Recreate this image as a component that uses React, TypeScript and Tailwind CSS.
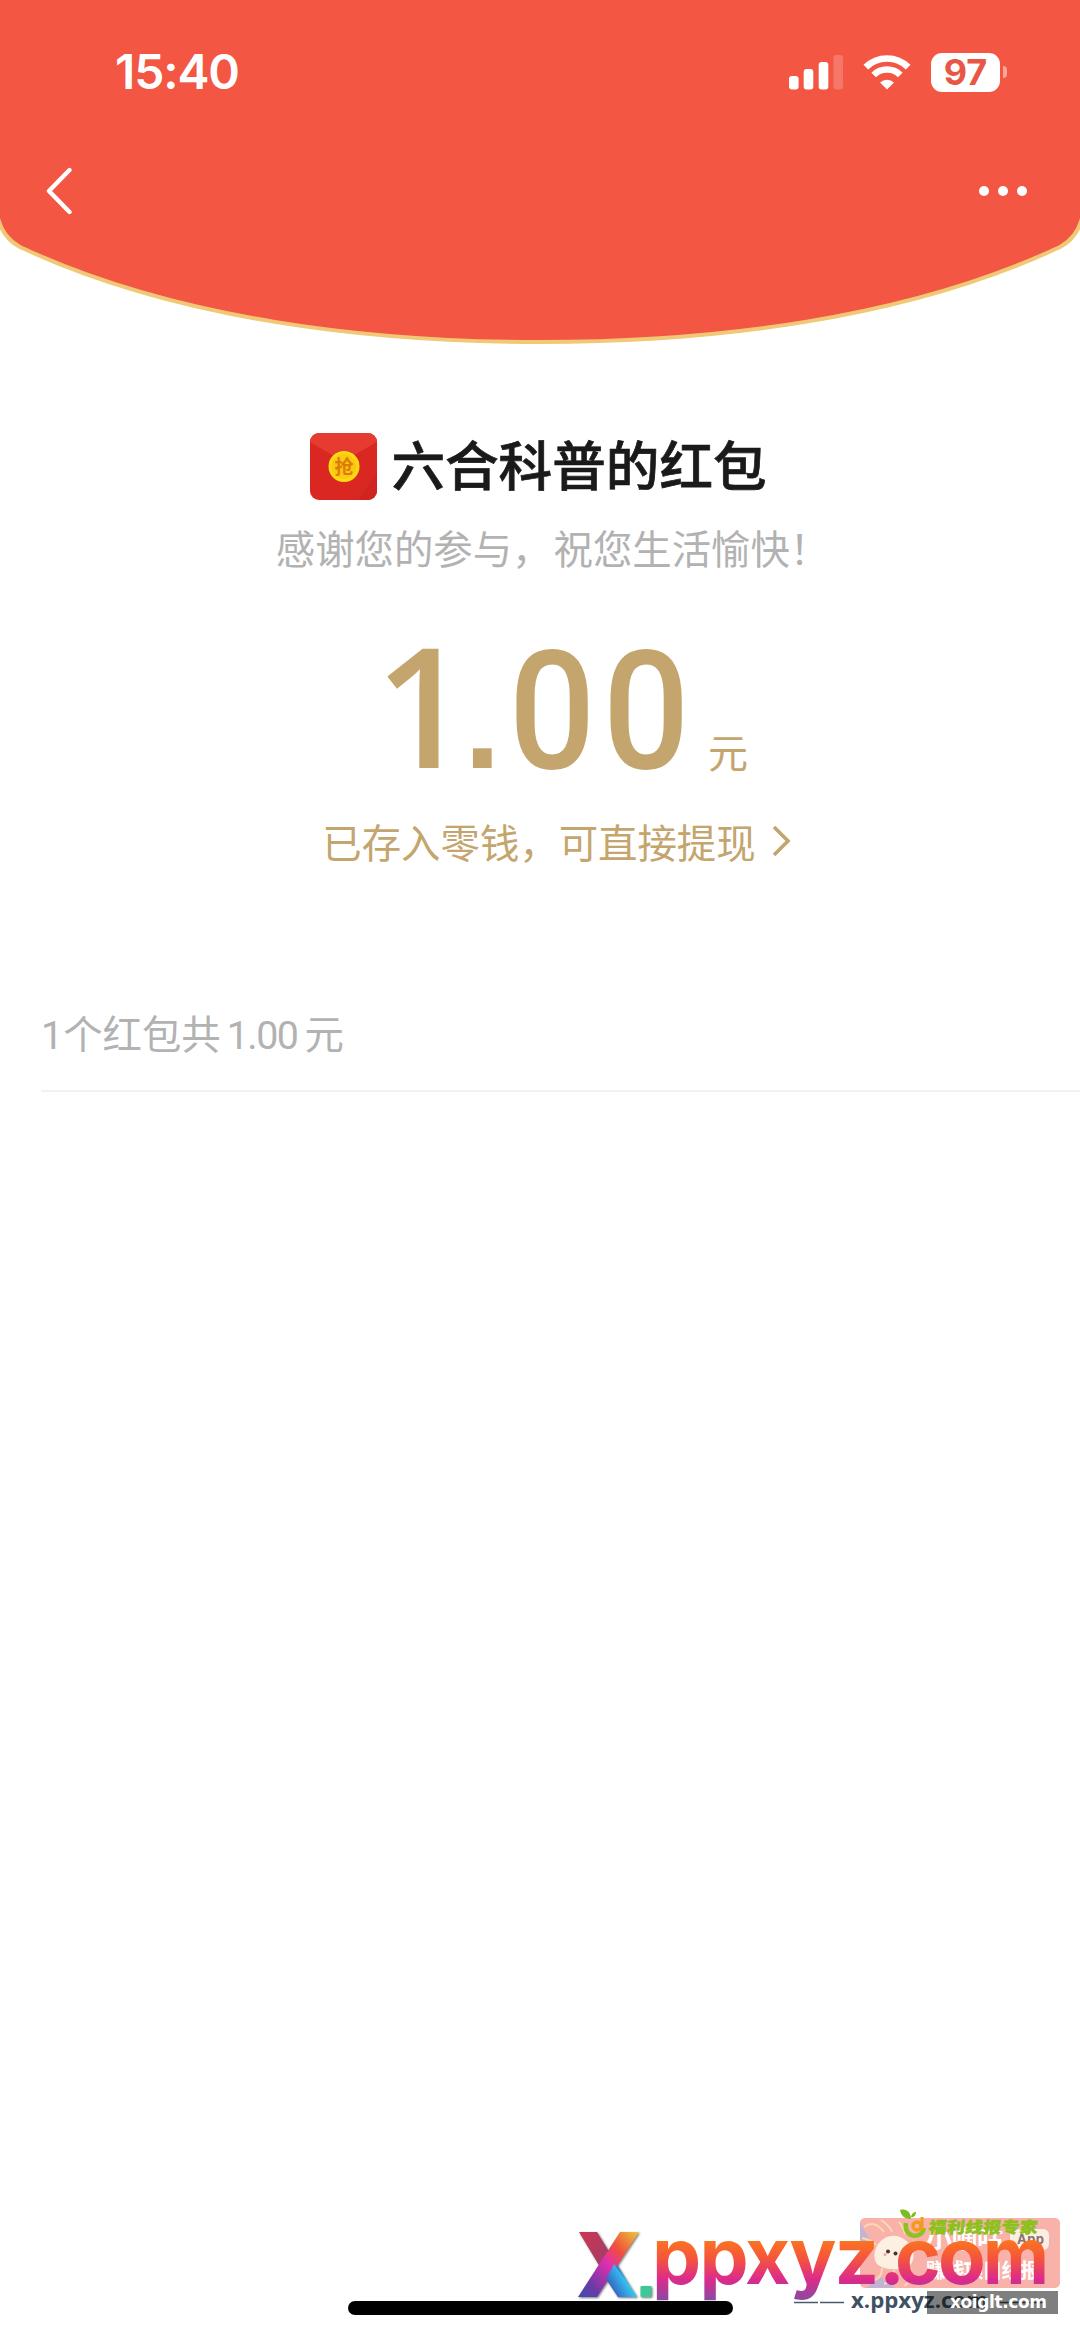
const StatusBar = () => {
  return (
    <div className="flex h-[144px] items-center justify-between pl-[115px] pr-[73px] text-white">
      <span className="font-[Inter] text-[48px] leading-none font-semibold tracking-[-1.1px]">
        15:40
      </span>
      <div className="flex items-center">
        <svg width="54" height="36" viewBox="0 0 54 36" fill="#fff">
          <rect x="0" y="22" width="9.6" height="13.5" rx="3" />
          <rect x="14.7" y="15" width="9.6" height="20.5" rx="3" />
          <rect x="29.7" y="8" width="9.6" height="27.5" rx="3" />
          <rect x="44.4" y="1" width="9.6" height="34.5" rx="3" opacity="0.2" />
        </svg>
        <svg
          className="ml-[20px]"
          width="48"
          height="36"
          viewBox="0 0 48 36"
          fill="none"
          stroke="#fff"
          strokeWidth="6.6">
          <path d="M2.8 13.2A30 30 0 0 1 45.2 13.2" />
          <path d="M10.7 21A19 19 0 0 1 37.3 21" />
          <path
            d="M24 35.5L17 28.4A10.4 10.4 0 0 1 31 28.4Z"
            fill="#fff"
            stroke="none"
          />
        </svg>
        <div className="ml-[20px] flex h-[39px] w-[69px] items-center justify-center rounded-[11px] bg-white font-[Inter] text-[36px] leading-none font-bold text-[#e85746]">
          97
        </div>
        <div className="ml-[3px] h-[12px] w-[4px] rounded-r-full bg-[#faa598]" />
      </div>
    </div>
  )
}

const NavBar = () => {
  return (
    <div className="flex h-[94px] items-center justify-between pl-[45px] pr-[53px]">
      <svg
        width="27"
        height="50"
        viewBox="0 0 27 50"
        fill="none"
        stroke="#fff"
        strokeWidth="4.4"
        strokeLinecap="round"
        strokeLinejoin="round">
        <path d="M24.5 4L4 25L24.5 46" />
      </svg>
      <div className="flex gap-[9px]">
        <i className="size-[10px] rounded-full bg-white" />
        <i className="size-[10px] rounded-full bg-white" />
        <i className="size-[10px] rounded-full bg-white" />
      </div>
    </div>
  )
}

const Header = () => {
  return (
    <header className="relative h-[348px]">
      <svg
        className="absolute inset-0"
        width="1080"
        height="348"
        viewBox="0 0 1080 348">
        <path
          d="M-4 -6V208C-2 226 5 239 20 247C176 320 370 342 540 342S904 320 1060 247C1075 239 1082 226 1084 208V-6Z"
          fill="#f35642"
          stroke="#f1c876"
          strokeWidth="4"
        />
      </svg>
      <div className="relative">
        <StatusBar />
        <NavBar />
      </div>
    </header>
  )
}

const PacketIcon = () => {
  return (
    <svg width="67" height="67" viewBox="0 0 67 67">
      <defs>
        <clipPath id="packet">
          <rect width="67" height="67" rx="9" />
        </clipPath>
      </defs>
      <g clipPath="url(#packet)">
        <rect width="67" height="67" fill="#db2721" />
        <path d="M67 40L48 67H67Z" fill="#cf2420" />
        <path d="M0 0H67V9L37 26Q33 28 29 26L0 9Z" fill="#e63b31" />
      </g>
      <circle cx="34" cy="33.5" r="15.5" fill="#fadb12" />
      <circle cx="34" cy="33.5" r="12.5" fill="#fbc90f" />
      <text
        x="34"
        y="40.5"
        textAnchor="middle"
        fontSize="19"
        fontWeight="700"
        fontFamily="'Noto Sans CJK SC', sans-serif"
        fill="#de7a0c">
        抢
      </text>
    </svg>
  )
}

const Amount = () => {
  return (
    <div className="mt-[62px] flex h-[150px] items-baseline pl-[43px] text-[166px] leading-[150px] font-medium text-[#c4a56d]">
      <span className="w-[84.5px] font-['Open_Sans'] font-semibold">1</span>
      <span className="w-[45.7px] text-center font-['Liberation_Sans'] text-[132px] font-bold">
        .
      </span>
      <span className="w-[94px] scale-x-92 text-center font-[Roboto]">0</span>
      <span className="w-[94px] scale-x-92 text-center font-[Roboto]">0</span>
      <span className="mb-[2px] ml-[15px] text-[40px] leading-none font-normal">
        元
      </span>
    </div>
  )
}

const Watermark = () => {
  return (
    <svg
      className="absolute bottom-0 right-0"
      width="520"
      height="138"
      viewBox="560 2200 520 138">
      <defs>
        <linearGradient
          id="brand"
          gradientUnits="userSpaceOnUse"
          x1="0"
          y1="2241"
          x2="0"
          y2="2300">
          <stop offset="0" stopColor="#fa7421" />
          <stop offset="0.3" stopColor="#f5543d" />
          <stop offset="0.65" stopColor="#dc2a8c" />
          <stop offset="1" stopColor="#8a4aa0" />
        </linearGradient>
        <linearGradient id="x1" x1="0" y1="0" x2="1" y2="1">
          <stop offset="0" stopColor="#cf3550" />
          <stop offset="0.45" stopColor="#a43d68" />
          <stop offset="0.55" stopColor="#2e63cf" />
          <stop offset="0.85" stopColor="#3ed0e8" />
        </linearGradient>
        <linearGradient id="x2" x1="1" y1="0" x2="0" y2="1">
          <stop offset="0" stopColor="#ecc83c" />
          <stop offset="0.3" stopColor="#f0503a" />
          <stop offset="0.5" stopColor="#e02fb0" />
          <stop offset="0.8" stopColor="#6a3aa8" />
          <stop offset="1" stopColor="#3d4fb0" />
        </linearGradient>
        <linearGradient
          id="x3"
          gradientUnits="userSpaceOnUse"
          x1="608"
          y1="2288"
          x2="632"
          y2="2274">
          <stop offset="0" stopColor="#3455b8" />
          <stop offset="0.6" stopColor="#35b5ea" />
          <stop offset="1" stopColor="#45dfe6" />
        </linearGradient>
        <clipPath id="card">
          <rect x="860" y="2218" width="200" height="70" rx="5" />
        </clipPath>
      </defs>

      {/* pink card */}
      <g clipPath="url(#card)">
        <rect x="860" y="2218" width="200" height="70" fill="#f9b2a9" />
        <path
          d="M860 2223L870 2239L860 2248ZM866 2288L880 2276L895 2288Z"
          fill="#c3b4d4"
        />
        <path
          d="M864 2227Q874 2219 884 2232M881 2220Q890 2226 892 2232M862 2238Q872 2240 876 2245M899 2222Q904 2228 905 2234M868 2281Q882 2281 882 2268M884 2284Q896 2280 894 2270M904 2286Q914 2280 910 2268"
          fill="none"
          stroke="#fbd9b0"
          strokeWidth="2"
        />
        <path
          d="M877 2246C882 2237 893 2233 902 2238C912 2243 917 2256 911 2264C905 2271 884 2271 877 2264C873 2258 874 2251 877 2246Z"
          fill="#fcf0e3"
        />
        <circle cx="888" cy="2251.5" r="2" fill="#4a3333" />
        <circle cx="895.5" cy="2253.5" r="2" fill="#4a3333" />
        <circle cx="885" cy="2254.5" r="1.5" fill="#f5a5a0" />
      </g>
      <g
        fontFamily="'Noto Sans CJK SC', sans-serif"
        fontWeight="700"
        fill="#fff">
        <text x="926" y="2248" fontSize="26" textLength="77">
          小嘀咕
        </text>
        <text x="926" y="2278" fontSize="20" textLength="114">
          赚钱项目线报
        </text>
      </g>
      <rect x="1010" y="2229" width="39" height="21" rx="6" fill="#fdeee4" />
      <text
        x="1017"
        y="2244"
        fontSize="13"
        fontWeight="700"
        textLength="27"
        fontFamily="Inter, sans-serif"
        fill="#8a716f">
        App
      </text>

      {/* green badge */}
      <path
        d="M906 2223C903 2238 922 2240 924 2228"
        fill="none"
        stroke="#8cc320"
        strokeWidth="4.5"
      />
      <circle
        cx="917"
        cy="2226"
        r="4"
        fill="none"
        stroke="#f39a1c"
        strokeWidth="3.5"
      />
      <path d="M922 2217V2230" stroke="#f39a1c" strokeWidth="3" />
      <path
        d="M900 2210C907 2208 911 2213 911 2219C904 2219 901 2215 900 2210ZM911 2217C912 2213 914 2212 916 2212C916 2215 914 2218 911 2217Z"
        fill="#7dbb22"
      />
      <text
        transform="translate(928 2233) scale(1 0.88) skewX(-6)"
        fontSize="18"
        fontWeight="900"
        textLength="109"
        fontFamily="'Noto Sans CJK SC', sans-serif"
        fill="#8cc01c"
        stroke="#8cc01c"
        strokeWidth="0.5">
        福利线报专家
      </text>

      {/* large logo */}
      <g filter="drop-shadow(1px 1px 1px #0008)">
        <path d="M579 2232H597L637 2297H618Z" fill="url(#x1)" />
        <path d="M620 2232H639L597 2297H578Z" fill="url(#x2)" />
        <path d="M614 2264L637 2297H618L606 2279Z" fill="url(#x3)" />
        <rect x="640.5" y="2286" width="11" height="11" rx="1" fill="#3fc79b" />
      </g>
      <g
        fontSize="78"
        fontWeight="700"
        fontFamily="Inter, sans-serif"
        fill="url(#brand)">
        <text x="652 699.5 745 789.5 834.5 879 895 938" y="2284">
          ppxyz.co
        </text>
        <text
          x="983"
          y="2284"
          textLength="66"
          lengthAdjust="spacingAndGlyphs">
          m
        </text>
      </g>

      {/* small caption */}
      <path
        d="M794 2302.5H818M820 2302.5H844M997 2302.5H1046"
        stroke="#4a5c6b"
        strokeWidth="1.5"
      />
      <text
        x="851"
        y="2308"
        fontSize="21"
        fontWeight="700"
        textLength="137"
        lengthAdjust="spacingAndGlyphs"
        fontFamily="'Open Sans', sans-serif"
        fill="#3f5263">
        x.ppxyz.com
      </text>
      <rect x="927" y="2291" width="131" height="23" opacity="0.5" />
      <text
        x="950"
        y="2308"
        fontSize="17"
        fontWeight="700"
        textLength="97"
        fontFamily="'DejaVu Sans', sans-serif"
        fill="#fff">
        xoiglt.com
      </text>
    </svg>
  )
}

const App = () => {
  return (
    <div className="relative h-[2338px] w-[1080px] overflow-hidden bg-white font-['Noto_Sans_CJK_SC',sans-serif]">
      <Header />

      <main className="flex flex-col items-center">
        <div className="mt-[85px] flex h-[67px] items-center gap-[14px] pr-[3px]">
          <PacketIcon />
          <h1 className="mt-[-8px] text-[53.6px] leading-none font-medium text-[#1a1a1a] [-webkit-text-stroke:0.7px_#1a1a1a]">
            六合科普的红包
          </h1>
        </div>
        <p className="mt-[27px] pl-[25px] text-[39.4px] leading-[40px] whitespace-nowrap text-[#b2b2b2]">
          感谢您的参与，
          <span className="ml-[2px]">祝您生活愉快！</span>
        </p>

        <Amount />

        <div className="mt-[42px] flex items-center gap-[16px] pl-[33px] text-[#c4a56d]">
          <span className="text-[39.4px] leading-[40px]">
            已存入零钱，可直接提现
          </span>
          <svg
            width="19"
            height="32"
            viewBox="0 0 19 32"
            fill="none"
            stroke="currentColor"
            strokeWidth="3.6">
            <path d="M2 2L16 16L2 30" />
          </svg>
        </div>
      </main>

      <section className="mt-[143px] ml-[41px] border-b-2 border-[#f1f1f1] pb-[26px]">
        <p className="flex items-baseline text-[39.4px] leading-[56px] text-[#b2b2b2]">
          <span className="font-[Roboto]">1</span>
          <span>个红包共</span>
          <span className="ml-[6px] font-[Roboto] tracking-[-1.5px]">1.00</span>
          <span className="ml-[7px]">元</span>
        </p>
      </section>

      <div className="absolute bottom-[23px] left-[348px] h-[14px] w-[385px] rounded-full bg-black" />
      <Watermark />
    </div>
  )
}

export default App
